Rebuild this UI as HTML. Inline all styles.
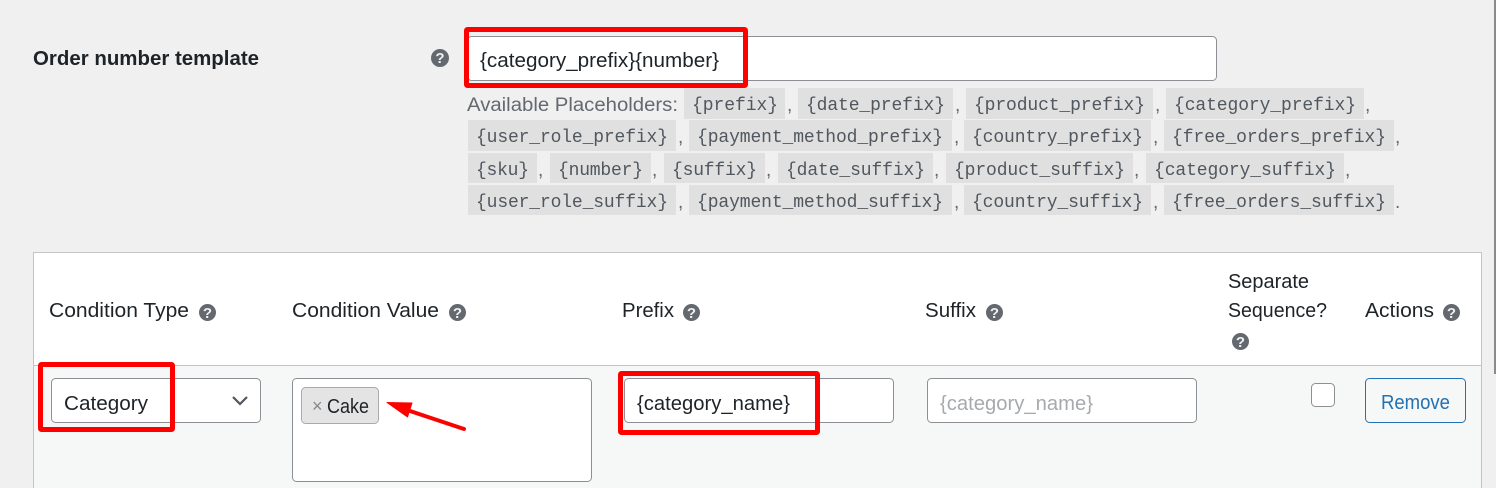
<!DOCTYPE html>
<html><head><meta charset="utf-8"><style>
html,body{margin:0;padding:0;width:1496px;height:488px;overflow:hidden;background:#f0f0f1}
svg{display:block}
text{font-family:"Liberation Sans",sans-serif;font-size:20px;fill:#1d2327}
.m{font-family:"Liberation Mono",monospace;font-size:18px;fill:#50575e}
.c{fill:#646970;font-size:19px}
.q{font-size:15px;font-weight:bold;fill:#f0f0f1;text-anchor:middle}
</style></head><body>
<svg width="1496" height="488" viewBox="0 0 1496 488" xmlns="http://www.w3.org/2000/svg">
<rect width="1496" height="488" fill="#f0f0f1"/>
<rect x="1494" y="0" width="2" height="374" fill="#8a8a8a"/>

<text x="33" y="65" style="font-weight:bold" textLength="226" lengthAdjust="spacingAndGlyphs">Order number template</text>
<circle cx="440" cy="58" r="9" fill="#646970"/><text class="q" x="440" y="63">?</text>

<rect x="467.500" y="36.500" width="749" height="44" rx="4" fill="#fff" stroke="#8c8f94"/>
<text x="480" y="67" textLength="239" lengthAdjust="spacingAndGlyphs">{category_prefix}{number}</text>
<rect x="466.500" y="29.500" width="279" height="56" rx="1" fill="none" stroke="#f00" stroke-width="5"/>

<text class="c" x="467" y="111" textLength="211" lengthAdjust="spacingAndGlyphs">Available Placeholders:</text>

<g fill="#e0e0e0">
<rect x="684" y="88" width="101" height="31"/><rect x="798" y="88" width="155" height="31"/><rect x="966" y="88" width="187" height="31"/><rect x="1166" y="88" width="198" height="31"/>
<rect x="468" y="120" width="208" height="31"/><rect x="689" y="120" width="263" height="31"/><rect x="964" y="120" width="187" height="31"/><rect x="1164" y="120" width="230" height="31"/>
<rect x="468" y="153" width="69" height="30"/><rect x="550" y="153" width="101" height="30"/><rect x="664" y="153" width="101" height="30"/><rect x="778" y="153" width="155" height="30"/><rect x="946" y="153" width="187" height="30"/><rect x="1146" y="153" width="198" height="30"/>
<rect x="468" y="185" width="208" height="30"/><rect x="689" y="185" width="263" height="30"/><rect x="964" y="185" width="187" height="30"/><rect x="1164" y="185" width="230" height="30"/>
</g>

<text class="m" x="692" y="110" textLength="86">{prefix}</text><text class="c" x="787" y="111">,</text>
<text class="m" x="806" y="110" textLength="139">{date_prefix}</text><text class="c" x="955" y="111">,</text>
<text class="m" x="974" y="110" textLength="171">{product_prefix}</text><text class="c" x="1155" y="111">,</text>
<text class="m" x="1174" y="110" textLength="182">{category_prefix}</text><text class="c" x="1365" y="111">,</text>

<text class="m" x="476" y="142" textLength="192">{user_role_prefix}</text><text class="c" x="678" y="143">,</text>
<text class="m" x="697" y="142" textLength="246">{payment_method_prefix}</text><text class="c" x="954" y="143">,</text>
<text class="m" x="972" y="142" textLength="171">{country_prefix}</text><text class="c" x="1153" y="143">,</text>
<text class="m" x="1172" y="142" textLength="214">{free_orders_prefix}</text><text class="c" x="1395" y="143">,</text>

<text class="m" x="476" y="175" textLength="53">{sku}</text><text class="c" x="538" y="176">,</text>
<text class="m" x="558" y="175" textLength="85">{number}</text><text class="c" x="652" y="176">,</text>
<text class="m" x="672" y="175" textLength="85">{suffix}</text><text class="c" x="766" y="176">,</text>
<text class="m" x="786" y="175" textLength="139">{date_suffix}</text><text class="c" x="934" y="176">,</text>
<text class="m" x="954" y="175" textLength="171">{product_suffix}</text><text class="c" x="1134" y="176">,</text>
<text class="m" x="1154" y="175" textLength="182">{category_suffix}</text><text class="c" x="1345" y="176">,</text>

<text class="m" x="476" y="207" textLength="192">{user_role_suffix}</text><text class="c" x="678" y="208">,</text>
<text class="m" x="697" y="207" textLength="246">{payment_method_suffix}</text><text class="c" x="954" y="208">,</text>
<text class="m" x="972" y="207" textLength="171">{country_suffix}</text><text class="c" x="1153" y="208">,</text>
<text class="m" x="1172" y="207" textLength="214">{free_orders_suffix}</text><text class="c" x="1395" y="208">.</text>

<!-- table -->
<rect x="33.500" y="252.500" width="1448" height="240" fill="#fff" stroke="#c3c4c7"/>
<rect x="34" y="366" width="1447" height="122" fill="#f6f7f7"/>
<rect x="34" y="365" width="1447" height="1" fill="#c3c4c7"/>

<text x="49" y="317" textLength="140" lengthAdjust="spacingAndGlyphs">Condition Type</text>
<circle cx="207.500" cy="312.500" r="8.500" fill="#646970"/><text class="q" x="207.500" y="318">?</text>
<text x="292" y="317" textLength="147" lengthAdjust="spacingAndGlyphs">Condition Value</text>
<circle cx="457.500" cy="312.500" r="8.500" fill="#646970"/><text class="q" x="457.500" y="318">?</text>
<text x="622" y="317" textLength="52" lengthAdjust="spacingAndGlyphs">Prefix</text>
<circle cx="691.500" cy="312.500" r="8.500" fill="#646970"/><text class="q" x="691.500" y="318">?</text>
<text x="925" y="317" textLength="51" lengthAdjust="spacingAndGlyphs">Suffix</text>
<circle cx="994.500" cy="312.500" r="8.500" fill="#646970"/><text class="q" x="994.500" y="318">?</text>
<text x="1228" y="288" textLength="81" lengthAdjust="spacingAndGlyphs">Separate</text>
<text x="1228" y="317" textLength="99" lengthAdjust="spacingAndGlyphs">Sequence?</text>
<circle cx="1240.500" cy="341.500" r="8.500" fill="#646970"/><text class="q" x="1240.500" y="347">?</text>
<text x="1365" y="317" textLength="69" lengthAdjust="spacingAndGlyphs">Actions</text>
<circle cx="1451.500" cy="312.500" r="8.500" fill="#646970"/><text class="q" x="1451.500" y="318">?</text>

<!-- select -->
<rect x="51.500" y="378.500" width="209" height="44" rx="4" fill="#fff" stroke="#8c8f94"/>
<text x="64" y="410" textLength="84" lengthAdjust="spacingAndGlyphs">Category</text>
<path d="M233 397l7 7 7-7" fill="none" stroke="#50575e" stroke-width="2.200"/>
<rect x="40.500" y="364.500" width="132" height="65" rx="1" fill="none" stroke="#f00" stroke-width="5"/>

<!-- condition value -->
<rect x="292.500" y="378.500" width="299" height="103" rx="4" fill="#fff" stroke="#8c8f94"/>
<rect x="301.500" y="387.500" width="77" height="36" rx="4" fill="#e4e4e4" stroke="#aaa"/>
<text x="312" y="412" style="font-size:18px;fill:#888">×</text>
<text x="327" y="413" textLength="42" lengthAdjust="spacingAndGlyphs">Cake</text>
<path d="M387 402.500L412 403 407.500 417Z" fill="#f00" stroke="#f00" stroke-width="1" stroke-linejoin="round"/>
<path d="M404 409L464 429" fill="none" stroke="#f00" stroke-width="4" stroke-linecap="round"/>

<!-- prefix -->
<rect x="624.500" y="378.500" width="269" height="44" rx="4" fill="#fff" stroke="#8c8f94"/>
<text x="637" y="410" textLength="153" lengthAdjust="spacingAndGlyphs">{category_name}</text>
<rect x="620.500" y="373.500" width="197" height="59" rx="1" fill="none" stroke="#f00" stroke-width="5"/>

<!-- suffix -->
<rect x="927.500" y="378.500" width="269" height="44" rx="4" fill="#fff" stroke="#8c8f94"/>
<text x="940" y="410" textLength="153" lengthAdjust="spacingAndGlyphs" style="fill:#a7aaad">{category_name}</text>

<!-- checkbox + button -->
<rect x="1311.500" y="383.500" width="23" height="23" rx="4" fill="#fff" stroke="#8c8f94"/>
<rect x="1365.500" y="378.500" width="100" height="44" rx="4" fill="#f6f7f7" stroke="#2271b1"/>
<text x="1381" y="409" textLength="69" lengthAdjust="spacingAndGlyphs" style="fill:#2271b1">Remove</text>
</svg>
</body></html>
